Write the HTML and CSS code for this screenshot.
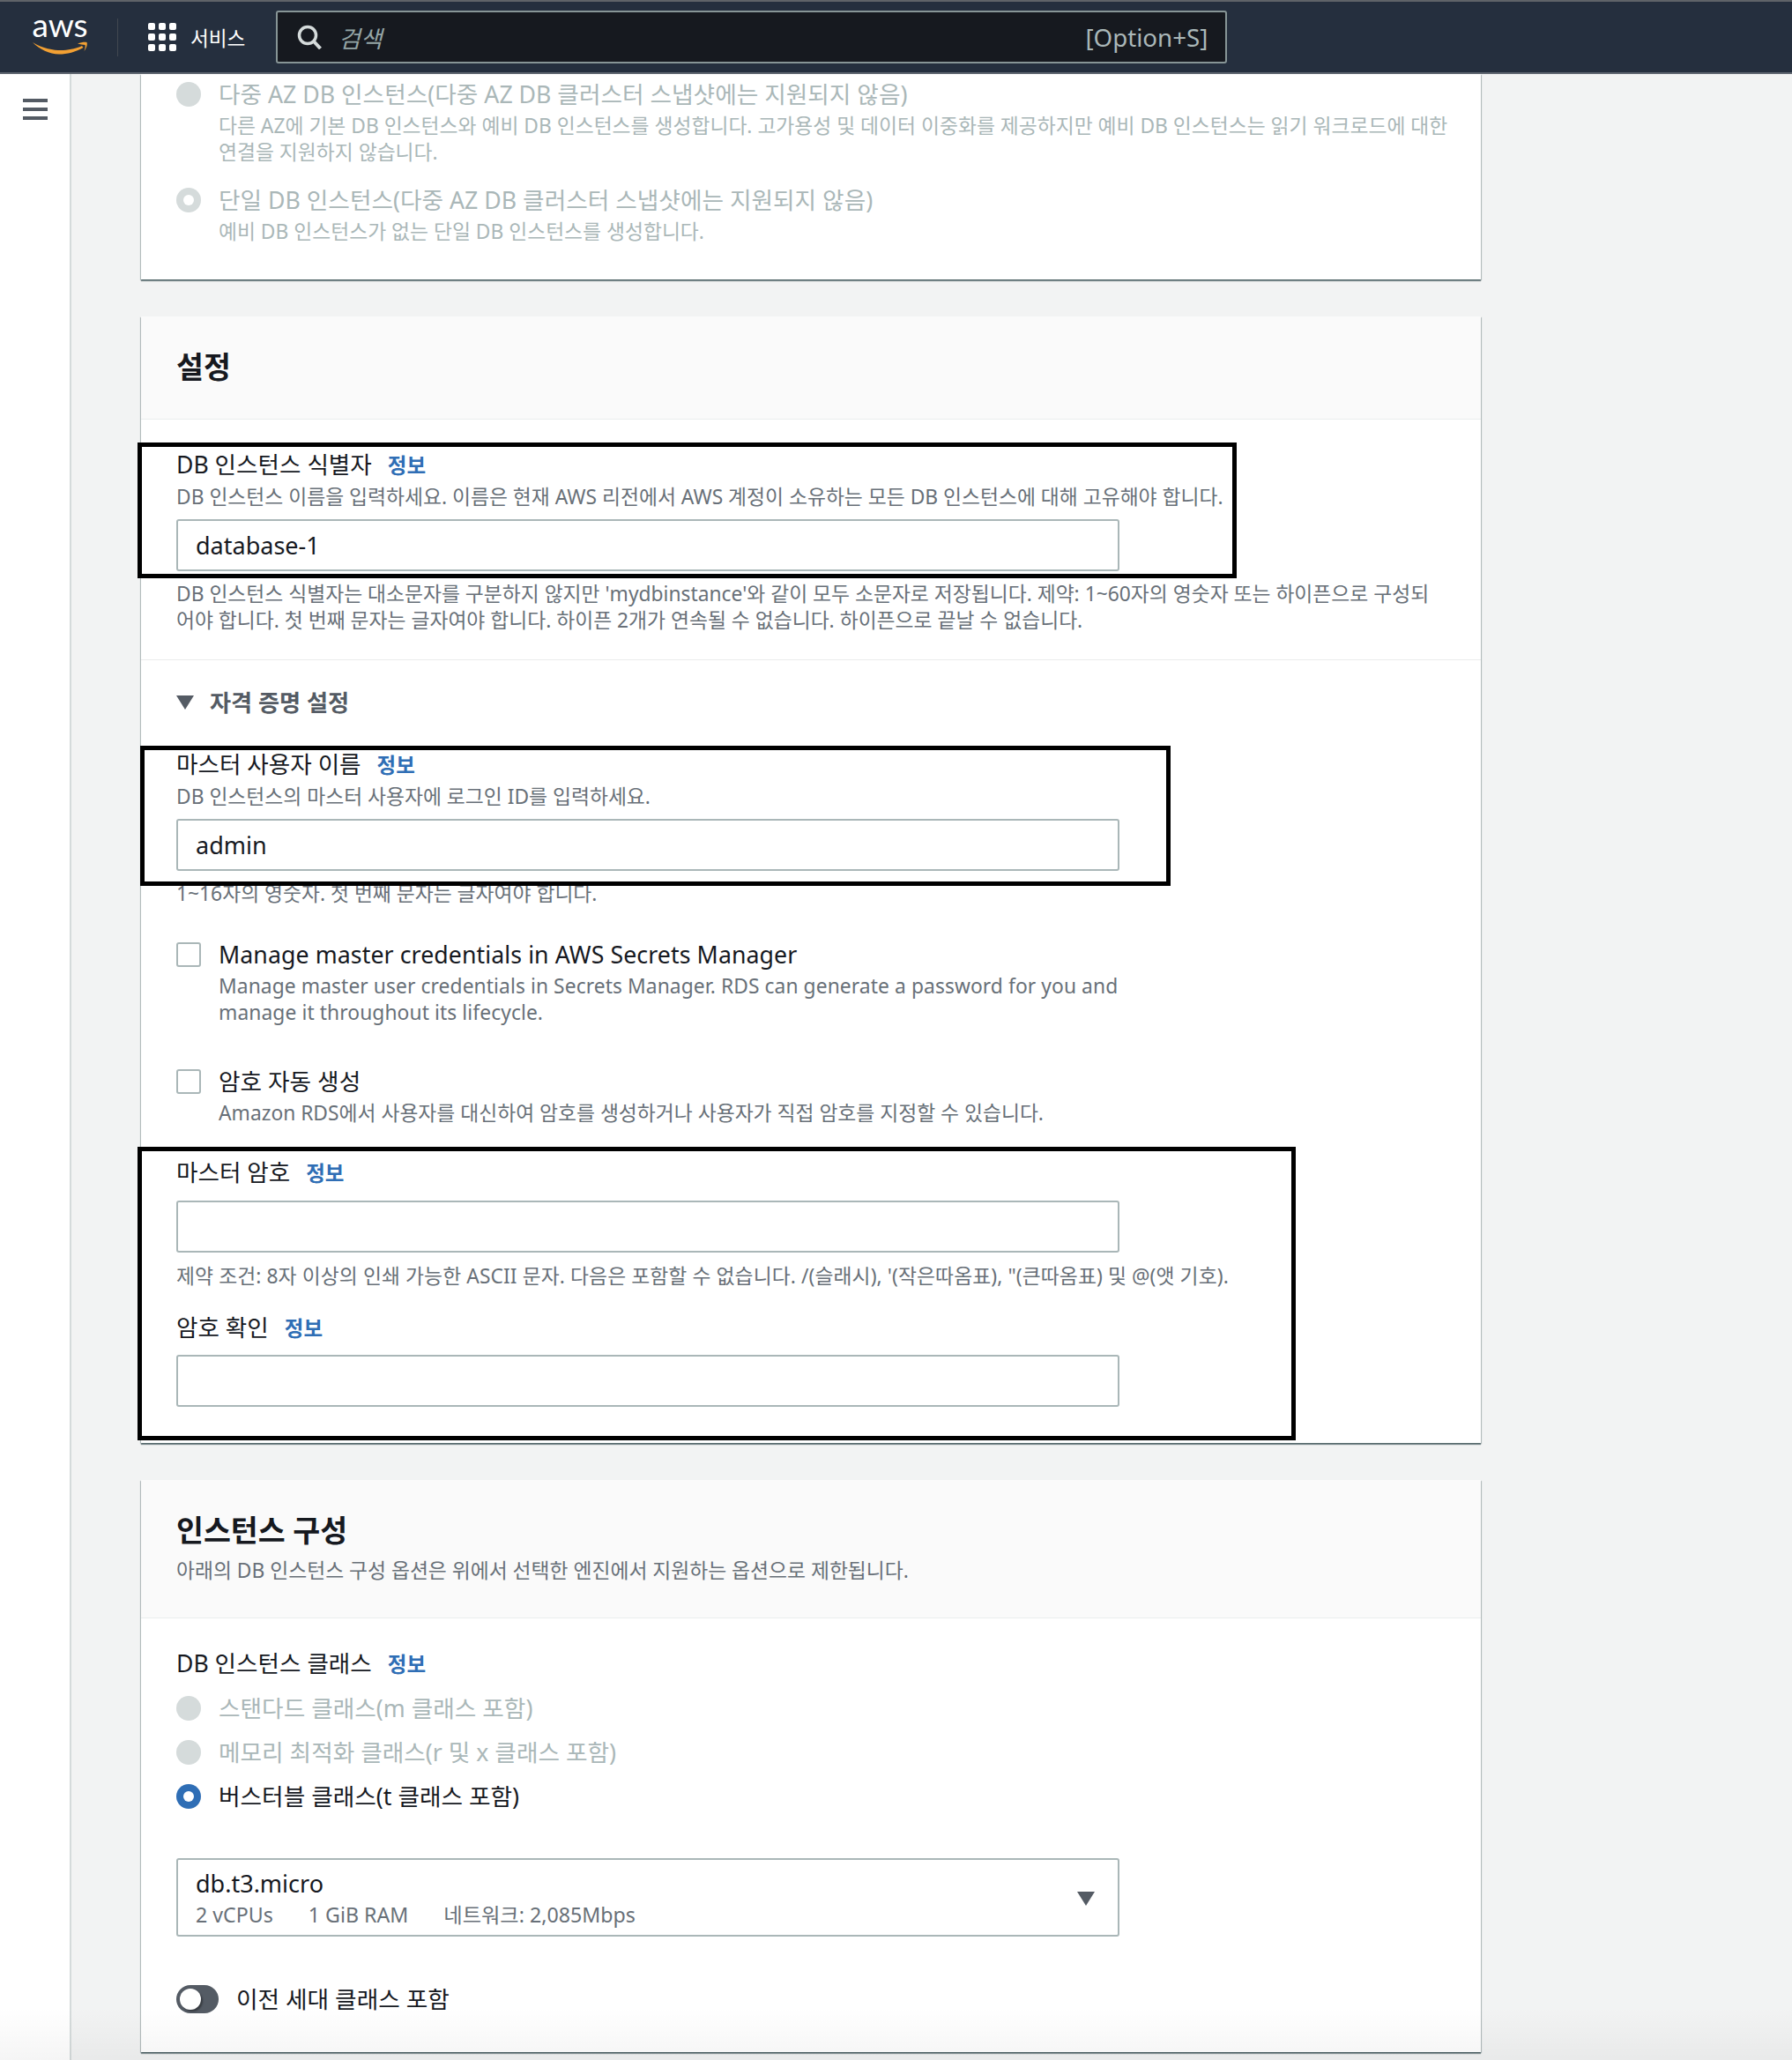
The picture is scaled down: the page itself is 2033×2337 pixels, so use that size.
FILE: index.html
```html
<!DOCTYPE html>
<html lang="ko">
<head>
    <meta charset="UTF-8">
    <title>RDS 데이터베이스 생성</title>
    <link rel="stylesheet" href="styles.css">
</head>
<body>
    <header class="topbar">
        <div class="logo">
            <span class="logoText">aws</span>
            <svg class="smile" width="64" height="18" viewBox="0 0 64 18">
                <path d="M1 2C14 10 28 11.500 36 11C44 10.500 52 8.500 57 6L58.500 8C50 13 40 15.500 31 15.500C20 15.500 9 10 1 2Z" fill="#f2a033"/>
                <path d="M52 3.500C56 2 60 1.500 62.500 2C63.500 4 62 9 59.500 12C60.500 9 61 6.500 60.500 5C58 4.500 55 4.500 52 3.500Z" fill="#f2a033"/>
            </svg>
        </div>
        <div class="topDivider"></div>
        <div class="gridIcon">
            <i></i><i></i><i></i><i></i><i></i><i></i><i></i><i></i><i></i>
        </div>
        <span class="services">서비스</span>
        <div class="searchBox">
            <svg width="28" height="28" viewBox="0 0 28 28">
                <circle cx="12" cy="12" r="9.500" fill="none" stroke="#d5dbdb" stroke-width="3.500"/>
                <path d="M19 19L26.500 27" stroke="#d5dbdb" stroke-width="4"/>
            </svg>
            <span class="searchText">검색</span>
            <span class="shortcut">[Option+S]</span>
        </div>
    </header>

    <div class="layout">
        <aside class="sidebar">
            <div class="burger"><i></i><i></i><i></i></div>
        </aside>

        <main class="main">
            <section class="card cardCut">
                <div class="choice off">
                    <span class="radio"></span>
                    <div>
                        <div class="choiceLabel">다중 AZ DB 인스턴스(다중 AZ DB 클러스터 스냅샷에는 지원되지 않음)</div>
                        <p class="desc choiceDesc">다른 AZ에 기본 DB 인스턴스와 예비 DB 인스턴스를 생성합니다. 고가용성 및 데이터 이중화를 제공하지만 예비 DB 인스턴스는 읽기 워크로드에 대한<br>연결을 지원하지 않습니다.</p>
                    </div>
                </div>
                <div class="choice off choiceNext">
                    <span class="radio dot"></span>
                    <div>
                        <div class="choiceLabel">단일 DB 인스턴스(다중 AZ DB 클러스터 스냅샷에는 지원되지 않음)</div>
                        <p class="desc choiceDesc">예비 DB 인스턴스가 없는 단일 DB 인스턴스를 생성합니다.</p>
                    </div>
                </div>
            </section>

            <section class="card settings">
                <div class="cardHead">
                    <h2>설정</h2>
                </div>
                <div class="block blockFirst">
                    <div class="label">DB 인스턴스 식별자<a class="info">정보</a></div>
                    <p class="desc descGap">DB 인스턴스 이름을 입력하세요. 이름은 현재 AWS 리전에서 AWS 계정이 소유하는 모든 DB 인스턴스에 대해 고유해야 합니다.</p>
                    <input class="field" type="text" value="database-1">
                    <p class="desc hint">DB 인스턴스 식별자는 대소문자를 구분하지 않지만 'mydbinstance'와 같이 모두 소문자로 저장됩니다. 제약: 1~60자의 영숫자 또는 하이픈으로 구성되<br>어야 합니다. 첫 번째 문자는 글자여야 합니다. 하이픈 2개가 연속될 수 없습니다. 하이픈으로 끝날 수 없습니다.</p>
                </div>
                <div class="block blockCreds">
                    <div class="expander"><span class="arrow"></span>자격 증명 설정</div>

                    <div class="label masterUser">마스터 사용자 이름<a class="info">정보</a></div>
                    <p class="desc descGap">DB 인스턴스의 마스터 사용자에 로그인 ID를 입력하세요.</p>
                    <input class="field" type="text" value="admin">
                    <p class="desc hint">1~16자의 영숫자. 첫 번째 문자는 글자여야 합니다.</p>

                    <div class="choice checkOne">
                        <span class="check"></span>
                        <div class="latin">
                            <div class="choiceLabel">Manage master credentials in AWS Secrets Manager</div>
                            <p class="desc choiceDesc">Manage master user credentials in Secrets Manager. RDS can generate a password for you and<br>manage it throughout its lifecycle.</p>
                        </div>
                    </div>
                    <div class="choice checkTwo">
                        <span class="check"></span>
                        <div>
                            <div class="choiceLabel">암호 자동 생성</div>
                            <p class="desc choiceDesc">Amazon RDS에서 사용자를 대신하여 암호를 생성하거나 사용자가 직접 암호를 지정할 수 있습니다.</p>
                        </div>
                    </div>

                    <div class="label masterPass">마스터 암호<a class="info">정보</a></div>
                    <input class="field fieldPass" type="password">
                    <p class="desc hint passHint latin">제약 조건: 8자 이상의 인쇄 가능한 ASCII 문자. 다음은 포함할 수 없습니다. /(슬래시), '(작은따옴표), "(큰따옴표) 및 @(앳 기호).</p>
                    <div class="label confirmPass">암호 확인<a class="info">정보</a></div>
                    <input class="field fieldPass" type="password">
                </div>
            </section>

            <section class="card instance">
                <div class="cardHead headDesc">
                    <h2>인스턴스 구성</h2>
                    <p class="desc">아래의 DB 인스턴스 구성 옵션은 위에서 선택한 엔진에서 지원하는 옵션으로 제한됩니다.</p>
                </div>
                <div class="block blockClass">
                    <div class="label">DB 인스턴스 클래스<a class="info">정보</a></div>
                    <div class="choice off radioRow radioFirst">
                        <span class="radio"></span>
                        <div class="choiceLabel">스탠다드 클래스(m 클래스 포함)</div>
                    </div>
                    <div class="choice off radioRow">
                        <span class="radio"></span>
                        <div class="choiceLabel">메모리 최적화 클래스(r 및 x 클래스 포함)</div>
                    </div>
                    <div class="choice radioRow">
                        <span class="radio dot on"></span>
                        <div class="choiceLabel">버스터블 클래스(t 클래스 포함)</div>
                    </div>
                    <div class="selectBox">
                        <div>
                            <div class="selectMain">db.t3.micro</div>
                            <div class="selectSub"><span>2 vCPUs</span><span>1 GiB RAM</span><span>네트워크: 2,085Mbps</span></div>
                        </div>
                        <span class="arrow selectArrow"></span>
                    </div>
                    <div class="toggleRow">
                        <span class="toggle"><i></i></span>
                        <span class="toggleText">이전 세대 클래스 포함</span>
                    </div>
                </div>
            </section>
        </main>
    </div>

    <!-- annotation boxes drawn on top of the screenshot -->
    <div class="mark markOne"></div>
    <div class="mark markTwo"></div>
    <div class="mark markThree"></div>
    <div class="bottomFade"></div>
</body>
</html>
```

FILE: styles.css
```css
*{
    box-sizing: border-box;
}
body{
    margin: 0;
    position: relative;
    height: 2337px;
    overflow: hidden;
    background-color: #f2f3f3;
    font-family: "Noto Sans", "Noto Sans CJK KR", sans-serif;
    color: #16191f;
}
p{
    margin: 0;
}

/* top bar */
.topbar{
    height: 84px;
    display: flex;
    align-items: center;
    background-color: #252f3e;
    border-top: 2px solid #5f6368;
    border-bottom: 2px solid #5f6670;
}
.logo{
    width: 64px;
    margin-left: 36px;
    display: flex;
    flex-direction: column;
    align-items: center;
}
.logoText{
    color: white;
    font-family: Lato, sans-serif;
    font-size: 37px;
    line-height: 14px;
    height: 25px;
}
.smile{
    display: block;
}
.topDivider{
    width: 1px;
    height: 43px;
    margin-left: 33px;
    background-color: #414750;
}
.gridIcon{
    width: 32px;
    height: 32px;
    margin-left: 34px;
    display: grid;
    grid-template-columns: repeat(3, 8px);
    grid-template-rows: repeat(3, 8px);
    gap: 4px;
}
.gridIcon i{
    background-color: white;
    border-radius: 2px;
}
.services{
    margin-left: 16px;
    color: white;
    font-size: 22.600px;
}
.searchBox{
    width: 1079px;
    height: 60px;
    margin-left: 35px;
    padding: 0 20px 0 22px;
    display: flex;
    align-items: center;
    background-color: #16191f;
    border: 2px solid #879596;
    border-radius: 3px;
}
.searchText{
    margin-left: 19px;
    color: #95a5a6;
    font-size: 26.700px;
    font-style: italic;
}
.shortcut{
    margin-left: auto;
    color: #aab7b8;
    font-size: 27.700px;
}

/* page columns */
.layout{
    display: flex;
    height: 2253px;
}
.sidebar{
    width: 81px;
    padding: 28px 0 0 26px;
    background-color: white;
    border-right: 2px solid #d5dbdb;
}
.burger{
    width: 28px;
    display: flex;
    flex-direction: column;
    gap: 6px;
}
.burger i{
    height: 4px;
    background-color: #545b64;
}
.main{
    width: 1520px;
    margin-left: 79px;
}

/* cards */
.card{
    background-color: white;
    box-shadow: 0 2px 1px rgba(0, 28, 36, 0.45), 1px 1px 1px rgba(0, 28, 36, 0.2), -1px 1px 1px rgba(0, 28, 36, 0.2);
}
.cardCut{
    height: 233px;
    padding-top: 8px;
}
.settings{
    height: 1278px;
    margin-top: 42px;
}
.instance{
    height: 649px;
    margin-top: 42px;
}
.cardHead{
    height: 117px;
    padding: 36px 40px 0;
    background-color: #fafafa;
    border-bottom: 1px solid #eaeded;
}
.headDesc{
    height: 157px;
}
.headDesc .desc{
    margin-top: 10px;
}
.cardHead h2{
    margin: 0;
    font-size: 33.600px;
    line-height: 42px;
    font-weight: 700;
}
.block{
    padding: 0 40px;
}
.blockFirst{
    padding-top: 36px;
    height: 273px;
    border-bottom: 1px solid #eaeded;
}
.blockCreds{
    padding-top: 33px;
}
.blockClass{
    padding-top: 36px;
}

/* text */
.label{
    font-size: 26.600px;
    line-height: 30px;
}
.info{
    margin-left: 18px;
    color: #2f6eb5;
    font-size: 23.500px;
    line-height: 1;
    font-weight: 700;
}
.desc{
    color: #687078;
    font-size: 22.800px;
    line-height: 30px;
}
.descGap{
    margin-top: 7px;
}
.hint{
    margin-top: 11px;
}
.passHint{
    margin-top: 12px;
}
.latin{
    letter-spacing: 0.090px;
}

/* inputs */
.field{
    display: block;
    width: 1070px;
    height: 59px;
    margin-top: 10px;
    padding: 0 20px;
    color: #16191f;
    font-family: inherit;
    font-size: 27px;
    background-color: white;
    border: 2px solid #aab7b8;
    border-radius: 3px;
}
.masterPass + .fieldPass{
    margin-top: 17px;
}
.confirmPass + .fieldPass{
    margin-top: 16px;
}

.expander{
    display: flex;
    align-items: center;
    color: #545b64;
    font-size: 26.200px;
    line-height: 30px;
    font-weight: 700;
}
.arrow{
    width: 0;
    height: 0;
    margin-right: 18px;
    border-left: 10px solid transparent;
    border-right: 10px solid transparent;
    border-top: 16px solid #545b64;
}
.masterUser{
    margin-top: 40px;
}
.masterPass{
    margin-top: 37px;
}
.confirmPass{
    margin-top: 28px;
}

/* radios and checkboxes */
.choice{
    display: flex;
    margin-left: 40px;
}
.block .choice{
    margin-left: 0;
}
.choiceNext{
    margin-top: 24px;
}
.checkOne{
    margin-top: 39px;
}
.checkTwo{
    margin-top: 48px;
}
.radioRow{
    margin-top: 20px;
}
.radioFirst{
    margin-top: 21px;
}
.radio, .check{
    flex: none;
    width: 28px;
    height: 28px;
    margin: 1px 20px 0 0;
}
.radio{
    display: flex;
    align-items: center;
    justify-content: center;
    background-color: #d5dbdb;
    border-radius: 50%;
}
.radio.dot::after{
    content: "";
    width: 12px;
    height: 12px;
    background-color: white;
    border-radius: 50%;
}
.radio.on{
    background-color: #2f6eb5;
}
.check{
    background-color: white;
    border: 2px solid #aab7b8;
    border-radius: 3px;
}
.choiceLabel{
    font-size: 26.700px;
    line-height: 30px;
}
.choiceDesc{
    margin-top: 6px;
}
.off .choiceLabel, .off .desc{
    color: #aab7b8;
}

/* select */
.selectBox{
    width: 1070px;
    height: 89px;
    margin-top: 55px;
    padding: 2px 26px 0 20px;
    display: flex;
    align-items: center;
    justify-content: space-between;
    border: 2px solid #aab7b8;
    border-radius: 3px;
}
.selectMain{
    font-size: 27px;
    line-height: 36px;
}
.selectSub{
    display: flex;
    gap: 40px;
    margin-top: 1px;
    color: #687078;
    font-size: 23.200px;
    line-height: 32px;
}
.selectArrow{
    margin-right: 0;
}

/* toggle */
.toggleRow{
    display: flex;
    align-items: center;
    margin-top: 55px;
}
.toggle{
    width: 48px;
    height: 32px;
    padding: 4px;
    background-color: #545b64;
    border-radius: 16px;
}
.toggle i{
    display: block;
    width: 24px;
    height: 24px;
    background-color: white;
    border-radius: 50%;
    box-shadow: 2px 2px 2px rgba(0, 0, 0, 0.35);
}
.toggleText{
    margin-left: 20px;
    font-size: 26.700px;
    line-height: 30px;
}

/* black rectangles over the form */
.mark{
    position: absolute;
    border: 5px solid black;
}
.markOne{
    left: 156px;
    top: 502px;
    width: 1247px;
    height: 154px;
}
.markTwo{
    left: 159px;
    top: 846px;
    width: 1169px;
    height: 159px;
}
.markThree{
    left: 156px;
    top: 1301px;
    width: 1314px;
    height: 333px;
}
.bottomFade{
    position: absolute;
    left: 0;
    right: 0;
    bottom: 0;
    height: 60px;
    background: linear-gradient(rgba(0, 0, 0, 0), rgba(0, 0, 0, 0.04));
}
```
